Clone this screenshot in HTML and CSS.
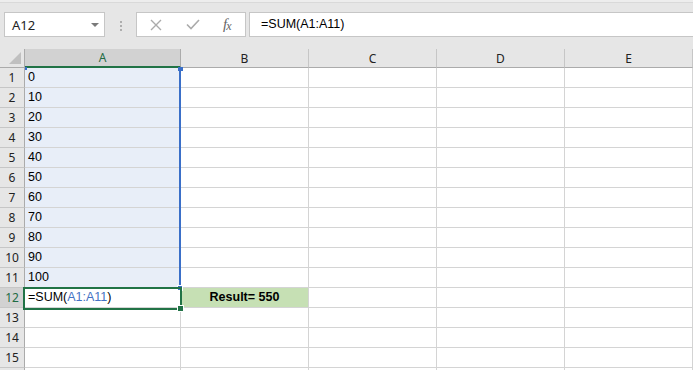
FILE: index.html
```html
<!DOCTYPE html>
<html>
<head>
<meta charset="utf-8">
<link rel="stylesheet" href="styles.css">
</head>
<body>
<div class="toolbar">
  <div class="strip"></div>
  <div class="bar">
    <div class="namebox"><span>A12</span><span class="caret"></span></div>
    <div class="grip"><i></i><i></i><i></i></div>
    <div class="buttons">
      <svg class="ico x" width="12" height="12" viewBox="0 0 12 12"><path d="M1 1L11 11M11 1L1 11" stroke="#ababab" stroke-width="1.4" fill="none"/></svg>
      <svg class="ico check" width="14" height="11" viewBox="0 0 14 11"><path d="M1 5.5L5 9.5L13 1" stroke="#ababab" stroke-width="1.6" fill="none"/></svg>
      <span class="fx">f<span class="fxx">x</span></span>
    </div>
    <div class="formula">=SUM(A1:A11)</div>
  </div>
</div>
<div class="sheet-wrap">
  <div class="sheet">
    <div class="corner"><span class="tri"></span></div>
    <div class="ch sel">A</div><div class="ch">B</div><div class="ch">C</div><div class="ch">D</div><div class="ch">E</div>

    <div class="rh">1</div><div class="c a">0</div><div class="c"></div><div class="c"></div><div class="c"></div><div class="c"></div>
    <div class="rh">2</div><div class="c a">10</div><div class="c"></div><div class="c"></div><div class="c"></div><div class="c"></div>
    <div class="rh">3</div><div class="c a">20</div><div class="c"></div><div class="c"></div><div class="c"></div><div class="c"></div>
    <div class="rh">4</div><div class="c a">30</div><div class="c"></div><div class="c"></div><div class="c"></div><div class="c"></div>
    <div class="rh">5</div><div class="c a">40</div><div class="c"></div><div class="c"></div><div class="c"></div><div class="c"></div>
    <div class="rh">6</div><div class="c a">50</div><div class="c"></div><div class="c"></div><div class="c"></div><div class="c"></div>
    <div class="rh">7</div><div class="c a">60</div><div class="c"></div><div class="c"></div><div class="c"></div><div class="c"></div>
    <div class="rh">8</div><div class="c a">70</div><div class="c"></div><div class="c"></div><div class="c"></div><div class="c"></div>
    <div class="rh">9</div><div class="c a">80</div><div class="c"></div><div class="c"></div><div class="c"></div><div class="c"></div>
    <div class="rh">10</div><div class="c a">90</div><div class="c"></div><div class="c"></div><div class="c"></div><div class="c"></div>
    <div class="rh">11</div><div class="c a">100</div><div class="c"></div><div class="c"></div><div class="c"></div><div class="c"></div>
    <div class="rh sel">12</div><div class="c">=SUM(<span class="ref">A1:A11</span>)</div><div class="c result">Result= 550</div><div class="c"></div><div class="c"></div><div class="c"></div>
    <div class="rh">13</div><div class="c"></div><div class="c"></div><div class="c"></div><div class="c"></div><div class="c"></div>
    <div class="rh">14</div><div class="c"></div><div class="c"></div><div class="c"></div><div class="c"></div><div class="c"></div>
    <div class="rh">15</div><div class="c"></div><div class="c"></div><div class="c"></div><div class="c"></div><div class="c"></div>
    <div class="rh"></div><div class="c"></div><div class="c"></div><div class="c"></div><div class="c"></div><div class="c"></div>
  </div>
  <div class="range-right"></div>
  <div class="range-tl"></div>
  <div class="range-tr"></div>
  <div class="range-br"></div>
  <div class="active"></div>
  <div class="handle"></div>
</div>
</body>
</html>
```

FILE: styles.css
```css
* { box-sizing: border-box; }
html, body { margin: 0; padding: 0; background: #fff; overflow: hidden; }
body { width: 693px; height: 370px; font-family: "Liberation Sans", Arial, sans-serif; }

.toolbar { height: 49px; background: #e6e6e6; }
.strip { height: 3px; background: #ededed; border-bottom: 1px solid #d9d9d9; }
.bar { display: flex; align-items: flex-start; padding-top: 9px; height: 45px; }

.namebox {
  margin-left: 4px; width: 101px; height: 25px;
  background: #fff; border: 1px solid #c6c6c6;
  display: flex; align-items: center; justify-content: space-between;
  padding: 0 5px 0 7px;
  font-family: "Noto Sans", sans-serif; font-size: 13px; color: #222;
}
.caret {
  width: 0; height: 0;
  border-left: 4px solid transparent; border-right: 4px solid transparent;
  border-top: 4px solid #7a7a7a;
}
.grip { margin-left: 15px; padding-top: 9px; display: flex; flex-direction: column; gap: 2px; }
.grip i { display: block; width: 2px; height: 2px; background: #aeaeae; }

.buttons {
  margin-left: 14px; width: 110px; height: 25px;
  background: #fff; border: 1px solid #c6c6c6;
  display: flex; align-items: center; padding-left: 13px;
}
.ico.x { margin-right: 24px; }
.ico.check { margin-right: 23px; }
.fx {
  font-family: "Liberation Serif", serif; font-style: italic; font-size: 15px;
  color: #666; line-height: 1;
}
.fxx { font-size: 12px; position: relative; top: 1px; margin-left: -1px; }

.formula {
  margin-left: 3px; flex: 1; height: 25px;
  background: #fff; border: 1px solid #c6c6c6; border-right: none;
  padding-left: 11px; line-height: 23px;
  font-size: 12.5px; color: #000;
}

.sheet-wrap { position: relative; }
.sheet {
  display: grid;
  grid-template-columns: 25px 156px 128px 128px 128px 128px;
  grid-template-rows: 19px;
  grid-auto-rows: 20px;
}
.corner { background: #e6e6e6; border-right: 1px solid #ababab; border-bottom: 1px solid #ababab; position: relative; }
.tri {
  position: absolute; right: 3px; bottom: 3px; width: 0; height: 0;
  border-left: 12px solid transparent; border-bottom: 12px solid #c0c0c0;
}
.ch {
  background: #e6e6e6; border-right: 1px solid #c6c6c6; border-bottom: 1px solid #ababab;
  display: flex; align-items: center; justify-content: center;
  font-family: "Noto Sans", sans-serif; font-size: 12px; color: #222;
}
.ch.sel { background: #d2d2d2; color: #1f6b44; border-bottom: 2px solid #217346; border-right-color: #ababab; }
.rh {
  background: #e6e6e6; border-right: 1px solid #ababab; border-bottom: 1px solid #c6c6c6;
  display: flex; align-items: center; justify-content: center;
  font-family: "Noto Sans", sans-serif; font-size: 12px; color: #222;
}
.rh.sel { background: #d2d2d2; color: #1f6b44; }
.c {
  border-right: 1px solid #d4d4d4; border-bottom: 1px solid #d4d4d4;
  font-size: 12.5px; color: #000; line-height: 19px; padding-left: 3px; white-space: nowrap;
}
.c.a { background: #e8eef8; }
.ref { color: #4472c4; }
.c.result { background: #c6e0b4; font-weight: bold; text-align: center; padding-left: 0; }

.range-right { position: absolute; left: 179px; top: 19px; width: 2px; height: 220px; background: #3a6fc8; }
.range-tl { position: absolute; left: 25px; top: 18px; width: 2px; height: 3px; background: #3a6fc8; }
.range-tr { position: absolute; left: 178px; top: 18px; width: 5px; height: 4px; background: #3a6fc8; }
.range-br { position: absolute; left: 177px; top: 236px; width: 6px; height: 6px; background: #3a6fc8; border: 1px solid #fff; }
.active { position: absolute; left: 23px; top: 238px; width: 159px; height: 23px; border: 2px solid #217346; }
.handle { position: absolute; left: 177px; top: 256px; width: 7px; height: 7px; background: #217346; border: 1px solid #fff; }
```
